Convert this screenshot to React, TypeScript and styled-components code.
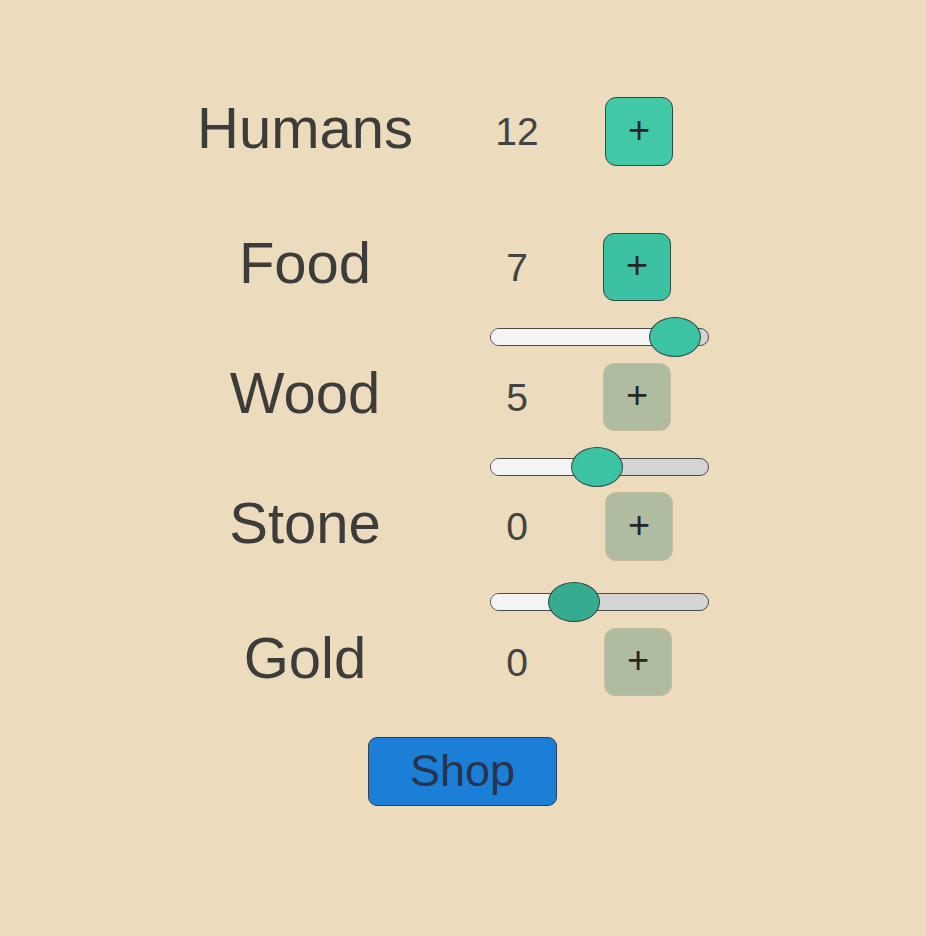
import React from "react";
import styled, { createGlobalStyle } from "styled-components";

const Global = createGlobalStyle`
  html, body { margin: 0; padding: 0; background: #ecdbbc; }
  body { font-family: "Liberation Sans", Arial, sans-serif; }
`;

const Page = styled.div`
  width: 926px;
  height: 936px;
  background: #ecdbbc;
  box-sizing: border-box;
  padding: 97px 0 0 180px;
  display: flex;
  flex-direction: column;
  align-items: flex-start;
`;

const Row = styled.div<{ $top: number; $h: number }>`
  margin-top: ${(p) => p.$top}px;
  height: ${(p) => p.$h}px;
  display: grid;
  grid-template-columns: 250px 100px 68px;
  column-gap: 37px;
  align-items: center;
`;

const Label = styled.div`
  text-align: center;
  font-size: 58px;
  color: #3c3c3a;
  line-height: 1;
  margin-top: -8px;
`;

const Count = styled.div`
  text-align: center;
  font-size: 39px;
  color: #434341;
  line-height: 1;
`;

const PlusButton = styled.button<{ $enabled: boolean; $shift: number; $tint: string }>`
  width: 68px;
  height: 100%;
  margin-left: ${(p) => p.$shift}px;
  box-sizing: border-box;
  border-radius: 11px;
  border: 1px solid ${(p) => (p.$enabled ? "#2f4a42" : "#c9bc9a")};
  background: ${(p) => (p.$enabled ? p.$tint : "#b0bc9f")};
  color: #262626;
  font-family: "Liberation Sans", Arial, sans-serif;
  font-size: 38px;
  line-height: 1;
  padding: 0 0 4px 0;
  display: flex;
  align-items: center;
  justify-content: center;
  cursor: pointer;
`;

const SliderRow = styled.div<{ $top: number }>`
  margin-top: ${(p) => p.$top}px;
  margin-left: 310px;
`;

const Track = styled.div`
  position: relative;
  width: 219px;
  height: 18px;
  box-sizing: border-box;
  border: 1px solid #4a4a4a;
  border-radius: 9px;
  background: #d4d4d4;
`;

const Fill = styled.div`
  height: 100%;
  border-radius: 8px 0 0 8px;
  background: #f4f4f4;
`;

const Thumb = styled.div<{ $color: string }>`
  position: absolute;
  top: -12px;
  width: 52px;
  height: 40px;
  margin-left: -26px;
  box-sizing: border-box;
  border-radius: 50%;
  border: 1px solid #2e4b43;
  background: ${(p) => p.$color};
`;

const ShopButton = styled.button`
  margin-top: 41px;
  margin-left: 188px;
  width: 189px;
  height: 69px;
  box-sizing: border-box;
  border-radius: 9px;
  border: 1px solid #2a3f5a;
  background: #1b7fd8;
  color: #27344c;
  font-family: "Liberation Sans", Arial, sans-serif;
  font-size: 45px;
  line-height: 1;
  padding: 0 0 2px 0;
  cursor: pointer;
`;

function Slider({ value, color }: { value: number; color: string }) {
  return (
    <Track>
      <Fill style={{ width: value }} />
      <Thumb $color={color} style={{ left: value }} />
    </Track>
  );
}

export default function App() {
  return (
    <>
      <Global />
      <Page>
        <Row $top={0} $h={69}>
          <Label>Humans</Label>
          <Count>12</Count>
          <PlusButton $enabled $shift={1} $tint="#41c9a7">+</PlusButton>
        </Row>
        <Row $top={67} $h={68}>
          <Label>Food</Label>
          <Count>7</Count>
          <PlusButton $enabled $shift={-1} $tint="#3cc1a2">+</PlusButton>
        </Row>
        <SliderRow $top={27}>
          <Slider value={184} color="#3cc3a3" />
        </SliderRow>
        <Row $top={17} $h={68}>
          <Label>Wood</Label>
          <Count>5</Count>
          <PlusButton $enabled={false} $shift={-1} $tint="">+</PlusButton>
        </Row>
        <SliderRow $top={27}>
          <Slider value={106} color="#3cc3a3" />
        </SliderRow>
        <Row $top={16} $h={69}>
          <Label>Stone</Label>
          <Count>0</Count>
          <PlusButton $enabled={false} $shift={1} $tint="">+</PlusButton>
        </Row>
        <SliderRow $top={32}>
          <Slider value={83} color="#35ab8f" />
        </SliderRow>
        <Row $top={17} $h={68}>
          <Label>Gold</Label>
          <Count>0</Count>
          <PlusButton $enabled={false} $shift={0} $tint="">+</PlusButton>
        </Row>
        <ShopButton>Shop</ShopButton>
      </Page>
    </>
  );
}
